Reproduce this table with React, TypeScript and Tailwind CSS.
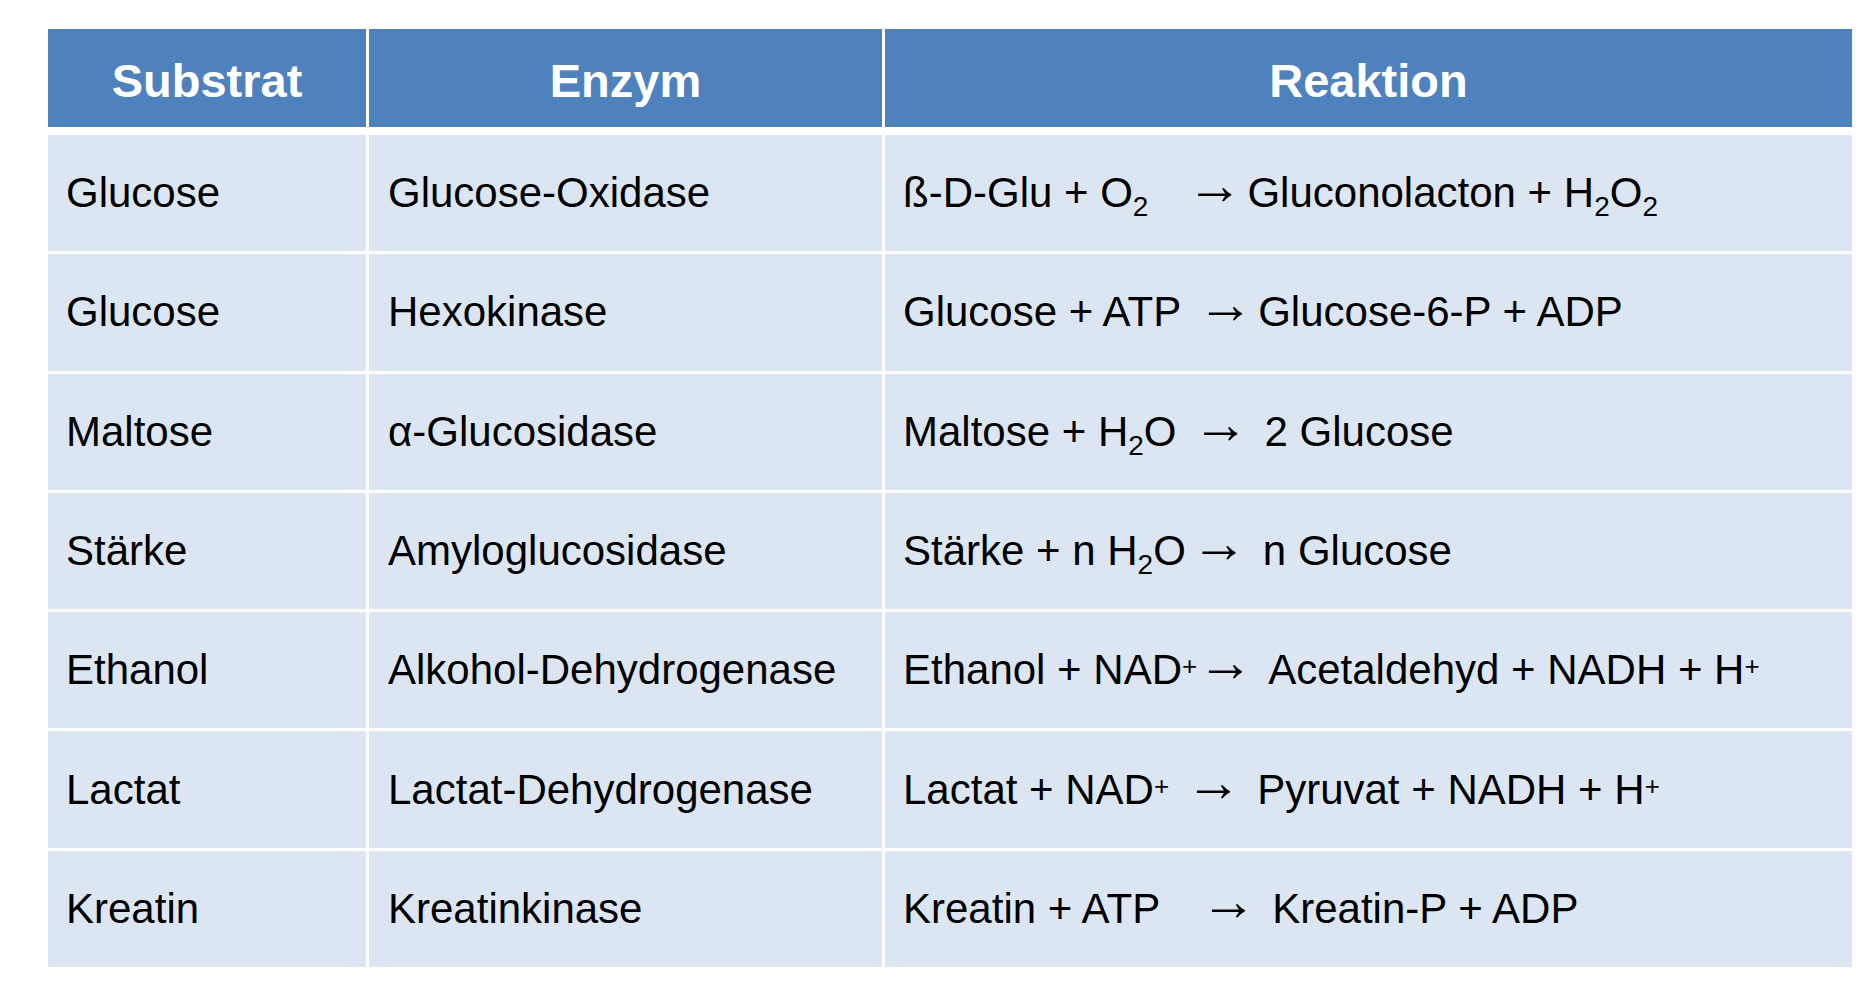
import React from 'react';

type Row = { substrat: string; enzym: string; reaktion: React.ReactNode };

const Sub = ({ children }: { children: React.ReactNode }) => (
  <sub className="text-[28px] bottom-[-9px]">{children}</sub>
);

const Plus = () => <sup className="text-[26px] top-[-9px]">+</sup>;

// long thin arrow like in the slide; spacing via margins
const Arrow = ({ className = '' }: { className?: string }) => (
  <span className={`inline-block text-[56px] leading-[0] -translate-y-[3px] ${className}`}>→</span>
);

const rows: Row[] = [
  {
    substrat: 'Glucose',
    enzym: 'Glucose-Oxidase',
    reaktion: (
      <>
        ß-D-Glu + O<Sub>2</Sub>
        <Arrow className="ml-[38px] mr-[5px]" />
        Gluconolacton + H<Sub>2</Sub>O<Sub>2</Sub>
      </>
    ),
  },
  {
    substrat: 'Glucose',
    enzym: 'Hexokinase',
    reaktion: (
      <>
        Glucose + ATP
        <Arrow className="ml-[16px] mr-[5px]" />
        Glucose-6-P + ADP
      </>
    ),
  },
  {
    substrat: 'Maltose',
    enzym: 'α-Glucosidase',
    reaktion: (
      <>
        Maltose + H<Sub>2</Sub>O
        <Arrow className="ml-[16px] mr-[16px]" />2 Glucose
      </>
    ),
  },
  {
    substrat: 'Stärke',
    enzym: 'Amyloglucosidase',
    reaktion: (
      <>
        Stärke + n H<Sub>2</Sub>O
        <Arrow className="ml-[5px] mr-[16px]" />n Glucose
      </>
    ),
  },
  {
    substrat: 'Ethanol',
    enzym: 'Alkohol-Dehydrogenase',
    reaktion: (
      <>
        Ethanol + NAD<Plus />
        <Arrow className="mr-[15px]" />
        Acetaldehyd + NADH + H<Plus />
      </>
    ),
  },
  {
    substrat: 'Lactat',
    enzym: 'Lactat-Dehydrogenase',
    reaktion: (
      <>
        Lactat + NAD<Plus />
        <Arrow className="ml-[16px] mr-[16px]" />
        Pyruvat + NADH + H<Plus />
      </>
    ),
  },
  {
    substrat: 'Kreatin',
    enzym: 'Kreatinkinase',
    reaktion: (
      <>
        Kreatin + ATP
        <Arrow className="ml-[40px] mr-[16px]" />
        Kreatin-P + ADP
      </>
    ),
  },
];

const cols = 'grid grid-cols-[318px_513px_967px] gap-x-[3px]';

function App() {
  return (
    <div className="min-h-screen bg-white [font-family:'Liberation_Sans',Arial,sans-serif] text-black">
      <div className="pl-[48px] pt-[29px]">
        {/* Header */}
        <div className={`${cols} h-[98px]`}>
          {['Substrat', 'Enzym', 'Reaktion'].map((h) => (
            <div
              key={h}
              className="bg-[#4f81bd] flex items-center justify-center text-white font-bold text-[47px] leading-none pt-[4px]"
            >
              {h}
            </div>
          ))}
        </div>

        <div className="mt-[8px] flex flex-col gap-y-[3px]">
          {rows.map((r, i) => (
            <div key={i} className={`${cols} h-[116.3px]`}>
              <div className="bg-[#dce6f2] flex items-center pl-[18px] text-[42px] leading-none">
                {r.substrat}
              </div>
              <div className="bg-[#dce6f2] flex items-center pl-[19px] text-[42px] leading-none">
                {r.enzym}
              </div>
              <div className="bg-[#dce6f2] flex items-center pl-[18px] text-[42px] leading-none">
                <span className="whitespace-pre">{r.reaktion}</span>
              </div>
            </div>
          ))}
        </div>
      </div>
    </div>
  );
}

export default App;
